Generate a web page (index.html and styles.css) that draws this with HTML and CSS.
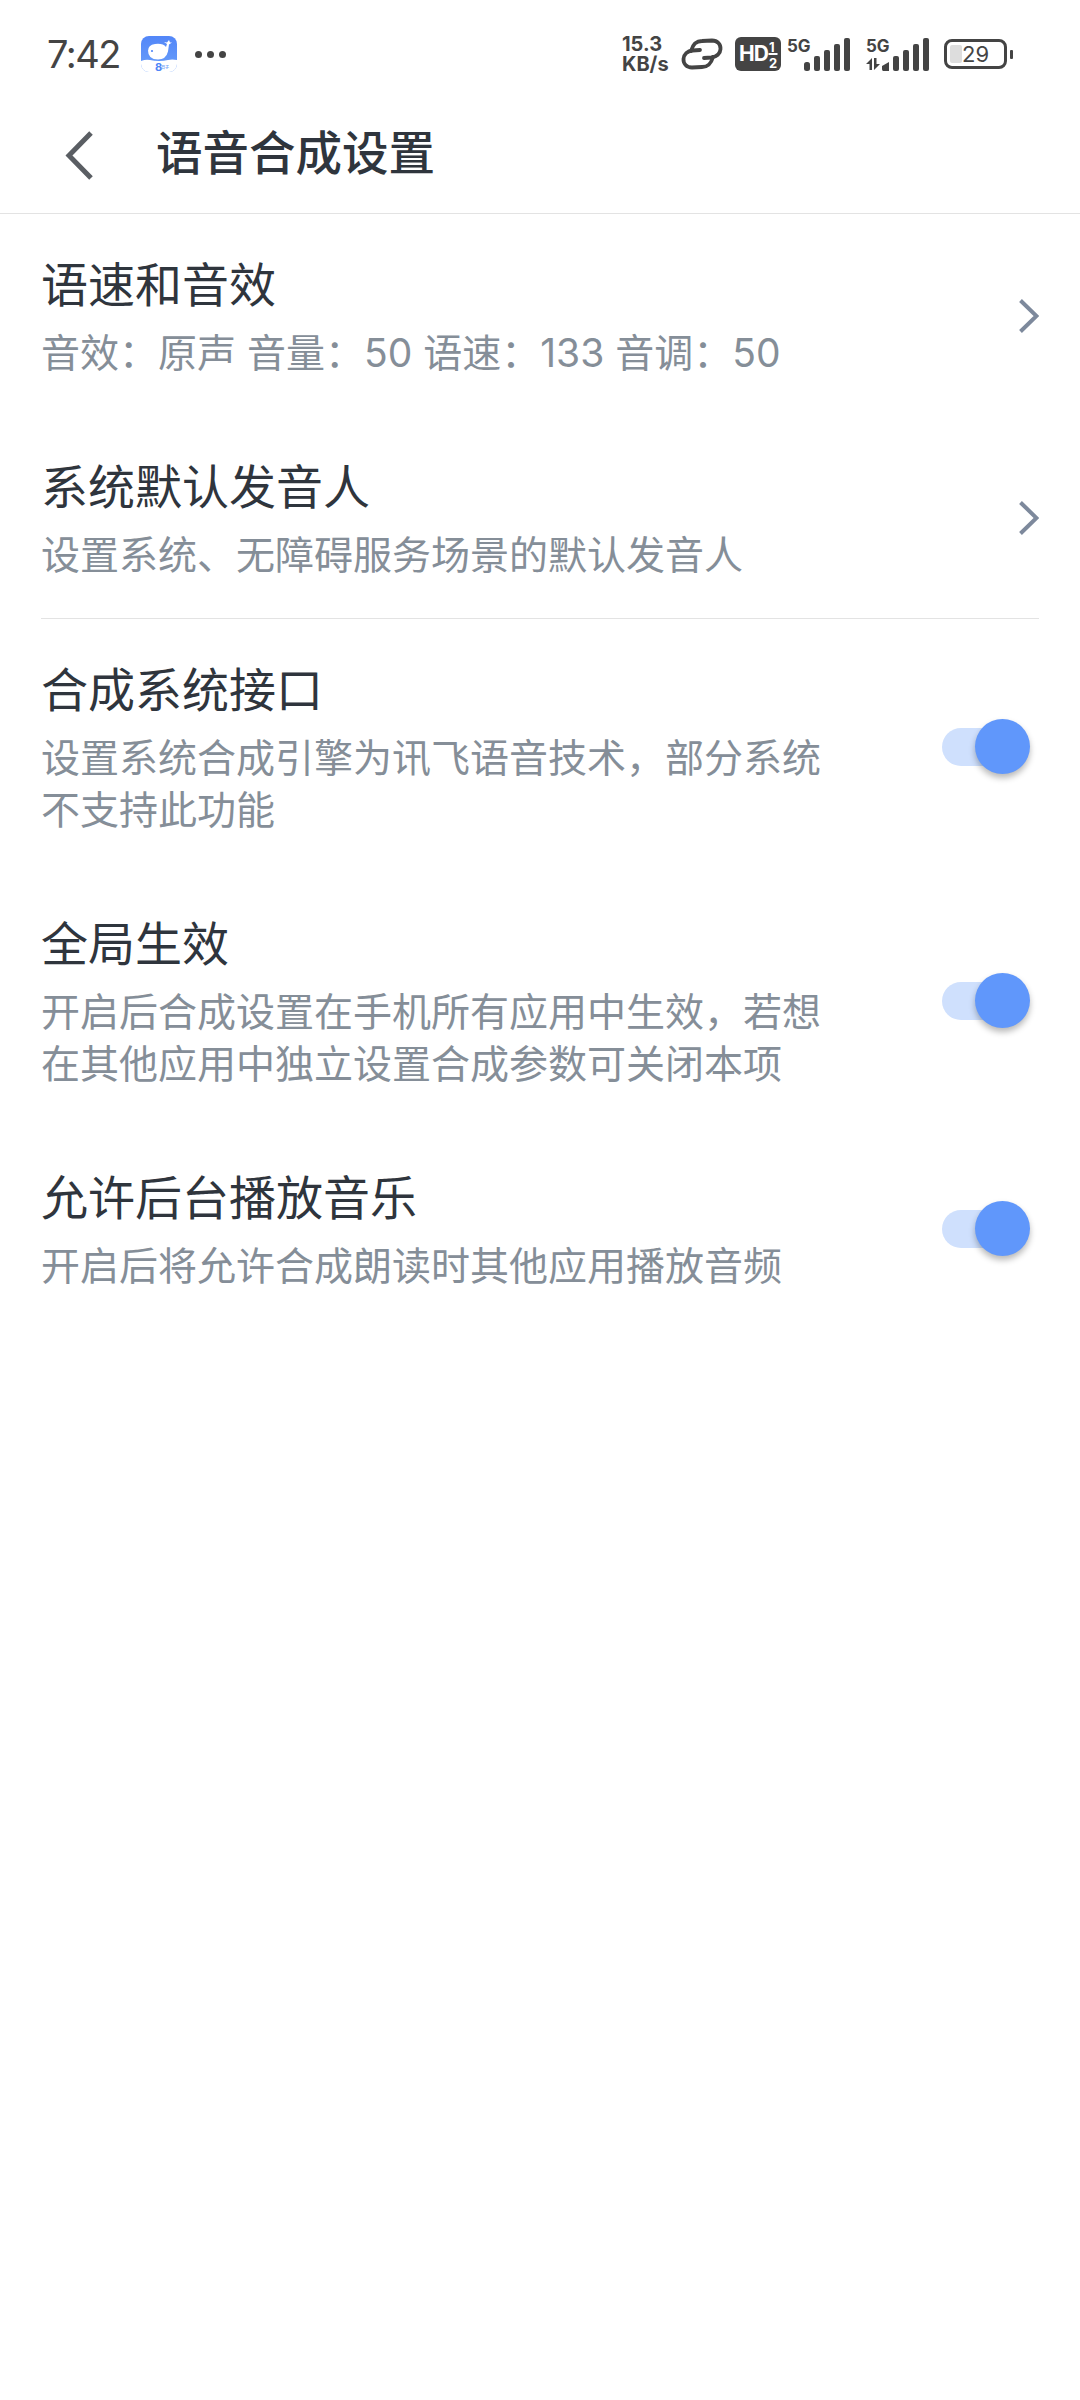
FILE: index.html
```html
<!DOCTYPE html>
<html lang="zh-CN">
<head>
<meta charset="utf-8">
<title>语音合成设置</title>
<link rel="stylesheet" href="styles.css">
</head>
<body>
<div class="status">
  <div class="status-left">
    <span class="time">7:42</span>
    <svg class="app" viewBox="0 0 36 36" width="36" height="36">
      <defs><linearGradient id="g" x1="0" y1="0" x2="0" y2="1"><stop offset="0" stop-color="#5286f8"/><stop offset="1" stop-color="#6aa0fa"/></linearGradient></defs>
      <rect width="36" height="36" rx="8" fill="url(#g)"/>
      <path d="M0 25q5-2 9-1t9 1 9-1 9 0v4a8 8 0 0 1-8 8H8a8 8 0 0 1-8-8z" fill="#fff"/>
      <path d="M7 15q0-6 7-7 8-1 11 3l1-3-3-2 3 .5 2-2.500 1 2.500 2 0-3 2-1 7q-2 8-10 8-10 0-10-9z" fill="#fff"/>
      <circle cx="11" cy="15" r="1.100" fill="#5286f8"/>
      <text x="14" y="34.500" class="app-num">8</text>
      <text x="20" y="33" class="app-tiny">日子</text>
    </svg>
    <span class="dots"><i></i><i></i><i></i></span>
  </div>
  <div class="status-right">
    <span class="speed"><b>15.3</b><b>KB/s</b></span>
    <svg class="link" width="42" height="32" viewBox="0 0 42 32" fill="none" stroke="#444" stroke-width="3.800" stroke-linecap="round">
      <path d="M10 13C12 6 15 3 21 3L31 2.500C36.500 2.500 39.800 6.500 39.500 11C39.200 16 35.500 19 30.500 19.500L23 20"/>
      <path d="M32 19C30 26 27 29 21 29L11 29.500C5.500 29.500 2.200 25.500 2.500 21C2.800 16 6.500 13 11.500 12.500L19 12"/>
    </svg>
    <svg class="hd" width="46" height="34" viewBox="0 0 46 34">
      <rect width="46" height="34" rx="6" fill="#444"/>
      <text x="4" y="24" class="hd-t">HD</text>
      <text x="34" y="14.500" class="hd-s">1</text>
      <rect x="33.500" y="16" width="9" height="2" fill="#fff"/>
      <text x="34" y="31" class="hd-s">2</text>
    </svg>
    <svg class="sig" width="66" height="34" viewBox="0 0 66 34" fill="#444">
      <text x="0" y="15" class="net">5G</text>
      <rect x="17" y="25" width="6" height="9" rx="2.500"/><rect x="27" y="19" width="6" height="15" rx="2"/><rect x="37" y="13" width="6" height="21" rx="2"/><rect x="47" y="7" width="6" height="27" rx="2"/><rect x="57" y="1" width="6" height="33" rx="2"/>
    </svg>
    <svg class="sig" width="66" height="34" viewBox="0 0 66 34" fill="#444">
      <text x="0" y="15" class="net">5G</text>
      <path d="M0 27l6-6v12h-2.500v-6zM8 21h2.500v6h3.500l-6 6z"/>
      <path d="M17 34a2.500 2.500 0 0 1-1-2l0-3 7-4v9z"/>
      <rect x="27" y="19" width="6" height="15" rx="2"/><rect x="37" y="13" width="6" height="21" rx="2"/><rect x="47" y="7" width="6" height="27" rx="2"/><rect x="57" y="1" width="6" height="33" rx="2"/>
    </svg>
    <div class="batt">
      <div class="batt-body"><i class="batt-fill"></i><span>29</span></div>
      <i class="batt-tip"></i>
    </div>
  </div>
</div>

<header class="bar">
  <svg class="back" width="30" height="50" viewBox="0 0 30 50" fill="none" stroke="#5a5e63" stroke-width="5"><path d="M27 2L5 24.500 27 47"/></svg>
  <h1>语音合成设置</h1>
</header>

<main>
  <section class="row">
    <div class="text"><div class="t">语速和音效</div><div class="s">音效：原声 音量：50 语速：133 音调：50</div></div>
    <svg class="chev" width="20" height="34" viewBox="0 0 20 34" fill="none" stroke="#7d899c" stroke-width="4"><path d="M1.500 1.500L17.500 17 1.500 32.500"/></svg>
  </section>
  <section class="row">
    <div class="text"><div class="t">系统默认发音人</div><div class="s">设置系统、无障碍服务场景的默认发音人</div></div>
    <svg class="chev" width="20" height="34" viewBox="0 0 20 34" fill="none" stroke="#7d899c" stroke-width="4"><path d="M1.500 1.500L17.500 17 1.500 32.500"/></svg>
  </section>
  <hr class="rule">
  <section class="row">
    <div class="text"><div class="t">合成系统接口</div><div class="s">设置系统合成引擎为讯飞语音技术，部分系统不支持此功能</div></div>
    <div class="toggle"><i></i></div>
  </section>
  <section class="row">
    <div class="text"><div class="t">全局生效</div><div class="s">开启后合成设置在手机所有应用中生效，若想在其他应用中独立设置合成参数可关闭本项</div></div>
    <div class="toggle"><i></i></div>
  </section>
  <section class="row">
    <div class="text"><div class="t">允许后台播放音乐</div><div class="s">开启后将允许合成朗读时其他应用播放音频</div></div>
    <div class="toggle"><i></i></div>
  </section>
</main>
</body>
</html>
```

FILE: styles.css
```css
* { box-sizing: border-box; }
html, body { margin: 0; padding: 0; }
body {
  width: 1080px;
  height: 2400px;
  background: #fff;
  overflow: hidden;
  font-family: Inter, "Noto Sans CJK SC", sans-serif;
}

.status {
  height: 108px;
  padding: 0 67px 0 47px;
  display: flex;
  justify-content: space-between;
  align-items: center;
}
.status-left { display: flex; align-items: center; }
.time { font-size: 38px; letter-spacing: -1.500px; color: #444; width: 94px; white-space: nowrap; }
.app { display: block; }
.app-num { font: 700 11px Inter, sans-serif; fill: #4f86f7; }
.app-tiny { font: 700 4px "Noto Sans CJK SC", sans-serif; fill: #7aa5f8; }
.dots { display: flex; gap: 5px; margin-left: 18px; }
.dots i { width: 7px; height: 7px; border-radius: 50%; background: #444; }

.status-right { display: flex; align-items: center; }
.speed { display: flex; flex-direction: column; width: 50px; margin-right: 9px; color: #444; font-size: 20px; line-height: 20px; }
.speed b { font-weight: 700; white-space: nowrap; }
.link { margin-right: 12px; }
.hd { margin-right: 6px; }
.hd-t { font: 700 21px Inter, sans-serif; fill: #fff; letter-spacing: -1px; }
.hd-s { font: 700 13px Inter, sans-serif; fill: #fff; }
.net { font: 700 17px Inter, sans-serif; fill: #444; }
.sig { margin-right: 13px; overflow: visible; }
.sig + .sig { margin-right: 12px; }
.batt { display: flex; align-items: center; gap: 3px; }
.batt-body {
  width: 63px;
  height: 30px;
  border: 3px solid #444;
  border-radius: 8px;
  display: flex;
  align-items: center;
  justify-content: center;
  position: relative;
  font-size: 22px;
  color: #444;
}
.batt-fill { position: absolute; left: 3px; top: 3px; bottom: 3px; width: 12px; background: #ddd; border-radius: 2px; }
.batt-body span { position: relative; }
.batt-tip { width: 3px; height: 9px; background: #444; border-radius: 1px; }

.bar {
  height: 106px;
  border-bottom: 1px solid #e3e3e3;
  display: flex;
  align-items: center;
  padding: 0 0 16px 64px;
}
.back { display: block; margin-top: 6px; }
.bar h1 {
  margin: 0 0 6px 62px;
  font-size: 46.500px;
  font-weight: 500;
  color: #2f353d;
}

.row {
  display: flex;
  justify-content: space-between;
  align-items: center;
  padding: 41px 41px 37px 41px;
}
.text { width: 800px; }
.t { font-size: 47px; line-height: 60px; color: #2f353d; }
.s { font-size: 39px; line-height: 52px; margin-top: 12px; color: #858e98; }
.rule { height: 1px; margin: 0 41px; border: 0; background: #e3e3e3; }
.chev { display: block; margin-bottom: 3px; }

.toggle {
  width: 80px;
  height: 38px;
  border-radius: 19px;
  background: #cfe0fd;
  position: relative;
  margin-right: 17px;
  margin-bottom: 2px;
}
.toggle i {
  position: absolute;
  right: -8px;
  top: -9px;
  width: 55px;
  height: 55px;
  border-radius: 50%;
  background: #6097fb;
  box-shadow: 0 4px 6px rgba(0, 0, 0, .28);
}
```
